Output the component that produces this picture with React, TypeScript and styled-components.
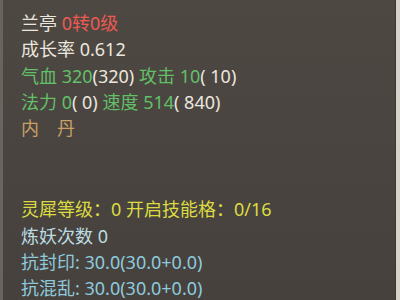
import React from "react";
import styled, { createGlobalStyle } from "styled-components";

const Global = createGlobalStyle`
  html, body { margin: 0; padding: 0; background: #4a4540; }
  body { width: 400px; height: 300px; overflow: hidden; }
`;

const Frame = styled.div`
  width: 400px;
  height: 300px;
  display: flex;
  overflow: hidden;
  background: #d7d3cb;
`;

const LeftEdge = styled.div`
  width: 3px;
  flex: none;
  background: #6b645d;
`;

const Panel = styled.div`
  flex: 1;
  background: linear-gradient(180deg, #4e4843 0%, #4a4540 40%, #46413c 100%);
  border-right: 1px solid #3c3733;
  padding: 10px 0 0 18px;
  font-family: "Noto Sans", "Noto Sans CJK SC", sans-serif;
  font-size: 18px;
  line-height: 26.3px;
  white-space: pre;
`;

const RightEdge = styled.div`
  width: 4px;
  flex: none;
  background: #d7d3cb;
`;

const Line = styled.div<{ $c?: string }>`
  color: ${(p) => p.$c || "#ebe7df"};
  height: 26.3px;
`;

const Spacer = styled.div`
  height: 55px;
`;

const Span = styled.span<{ $c: string }>`
  color: ${(p) => p.$c};
`;

const WHITE = "#ebe7df";
const RED = "#ec5a52";
const GREEN = "#62c068";
const TAN = "#c9a066";
const YELLOW = "#dcdc42";
const PALEBLUE = "#bcdce4";
const BLUE = "#8ecade";

export default function App() {
  return (
    <>
      <Global />
      <Frame>
        <LeftEdge />
        <Panel>
          <Line>
            兰亭 <Span $c={RED}>0转0级</Span>
          </Line>
          <Line>成长率 0.612</Line>
          <Line>
            <Span $c={GREEN}>气血 320</Span>
            <Span $c={WHITE}>(320) </Span>
            <Span $c={GREEN}>攻击 10</Span>
            <Span $c={WHITE}>( 10)</Span>
          </Line>
          <Line>
            <Span $c={GREEN}>法力 0</Span>
            <Span $c={WHITE}>( 0) </Span>
            <Span $c={GREEN}>速度 514</Span>
            <Span $c={WHITE}>( 840)</Span>
          </Line>
          <Line $c={TAN}>内　丹</Line>
          <Spacer />
          <Line $c={YELLOW}>灵犀等级：0 开启技能格：0/16</Line>
          <Line $c={PALEBLUE}>炼妖次数 0</Line>
          <Line $c={BLUE}>抗封印: 30.0(30.0+0.0)</Line>
          <Line $c={BLUE}>抗混乱: 30.0(30.0+0.0)</Line>
        </Panel>
        <RightEdge />
      </Frame>
    </>
  );
}
